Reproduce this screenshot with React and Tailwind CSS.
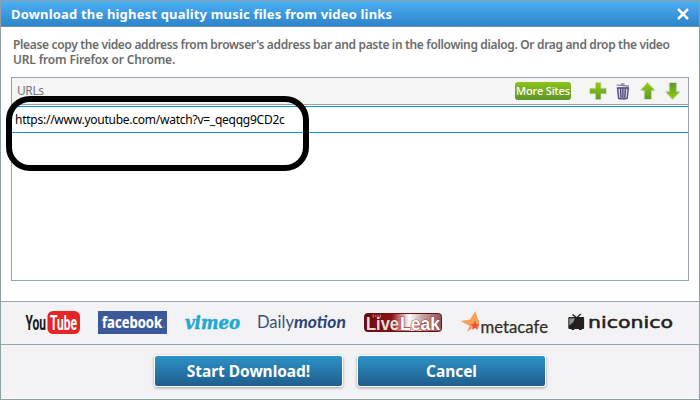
import React from "react";

const green = "url(#green)";

function Defs() {
  return (
    <svg className="absolute h-0 w-0">
      <defs>
        <linearGradient id="green" x1="0" y1="0" x2="0" y2="1">
          <stop offset="0" stopColor="#93cc12" />
          <stop offset="1" stopColor="#5c9c22" />
        </linearGradient>
        <linearGradient id="leak" x1="0" y1="0" x2="1" y2="0">
          <stop offset="0" stopColor="#6d0909" />
          <stop offset="0.36" stopColor="#8c1515" />
          <stop offset="0.47" stopColor="#c98080" />
          <stop offset="0.58" stopColor="#fff" />
          <stop offset="0.75" stopColor="#c9a4a4" />
          <stop offset="1" stopColor="#8a5555" />
        </linearGradient>
      </defs>
    </svg>
  );
}

function ToolIcon({ children }) {
  return (
    <svg width="21" height="20" viewBox="0 0 21 20" className="shrink-0">
      {children}
    </svg>
  );
}

function ArrowUp() {
  const d = "M10.5 1.8 L17.5 9.2 H14.2 V18 H7.6 V9.2 H4 Z";
  return (
    <g>
      <path d={d} fill="#dededf" stroke="#dededf" strokeWidth="2" strokeLinejoin="round" />
      <path d={d} fill={green} />
    </g>
  );
}

function Toolbar() {
  return (
    <div className="flex items-center">
      <button className="mr-[16px] h-[18px] w-[56px] rounded-[3px] bg-linear-to-b from-[#8cc41b] to-[#5d9424] text-center text-[11px] leading-[18px] font-medium tracking-[-0.15px] whitespace-nowrap text-white">
        More Sites
      </button>
      <div className="flex gap-[4px]">
        <ToolIcon>
          <path d="M8.7 1.8h5v5.8h5.4v5h-5.4v5.7h-5v-5.7H2.9v-5h5.8z" fill={green} stroke="#dfe2dc" strokeWidth="1.6" paintOrder="stroke" />
        </ToolIcon>
        <ToolIcon>
          <path d="M5 6.5 L16.5 5.5 L15.3 17.5 Q10.5 19.3 6.3 17.5 Z" fill="#d3d1df" />
          <path d="M4.5 4l12.5 1.2M9 2.8l3.5 .4" stroke="#77738f" strokeWidth="1.2" fill="none" />
          <path d="M5.5 7h10.8l-1.1 10.3q-4.3 1.2-8.6 0z" fill="none" stroke="#4c437e" strokeWidth="1.3" />
          <path d="M8.5 7.4l.6 9.5M10.9 7.4v9.8M13.3 7.4l-.5 9.5" stroke="#4c437e" strokeWidth="1.3" />
        </ToolIcon>
        <ToolIcon>
          <ArrowUp />
        </ToolIcon>
        <ToolIcon>
          <g transform="translate(0 20) scale(1 -1)">
            <ArrowUp />
          </g>
        </ToolIcon>
      </div>
    </div>
  );
}

function LogoStrip() {
  return (
    <svg width="698" height="42" viewBox="1 302 698 42" className="block">
      {/* YouTube */}
      <g fontFamily="Roboto, 'Liberation Sans', sans-serif" fontWeight="700">
        <text x="25.5" y="329.5" fontSize="20" textLength="20.5" lengthAdjust="spacingAndGlyphs" fill="#161616">You</text>
        <rect x="47.5" y="311" width="32.5" height="23" rx="5.5" fill="#e52527" />
        <text x="50" y="329.5" fontSize="19.5" textLength="27" lengthAdjust="spacingAndGlyphs" fill="#fff">Tube</text>
      </g>

      {/* facebook */}
      <rect x="98" y="311" width="69" height="23" fill="#3b5998" />
      <text x="102" y="328" fontFamily="'Open Sans', sans-serif" fontWeight="700" fontSize="15.5" textLength="60" lengthAdjust="spacingAndGlyphs" fill="#fff" stroke="#fff" strokeWidth=".2">facebook</text>
      <circle cx="164" cy="327" r=".6" fill="#b9c5df" />

      {/* vimeo */}
      <text x="185" y="329" stroke="#21a8d0" strokeWidth=".5" fill="#21a8d0" fontFamily="'DejaVu Serif', serif" fontWeight="700" fontStyle="italic" fontSize="18" textLength="55" lengthAdjust="spacingAndGlyphs">vimeo</text>

      {/* Dailymotion */}
      <text x="257" y="328" fontFamily="Lato, sans-serif" fontSize="17" textLength="37" lengthAdjust="spacingAndGlyphs" fill="#3c4e79">Daily</text>
      <text x="294" y="328" fontFamily="Lato, sans-serif" fontWeight="700" fontStyle="italic" fontSize="17" textLength="52" lengthAdjust="spacingAndGlyphs" fill="#2c4377">motion</text>

      {/* LiveLeak */}
      <rect x="364.5" y="313.5" width="77" height="18" rx="3" fill="url(#leak)" stroke="#6d1212" />
      <g fontFamily="'Liberation Sans', sans-serif" fontWeight="700" fontSize="17.5">
        <text x="366" y="329.5" textLength="33" lengthAdjust="spacingAndGlyphs" fill="#e4dcdc">Live</text>
        <text x="400" y="329.5" textLength="40" lengthAdjust="spacingAndGlyphs" fill="#fff" stroke="#9c4040" strokeWidth="1.2" paintOrder="stroke">Leak</text>
      </g>
      <path d="M373.5 314.5q-1.2 1.6 0 3.2M380 314.5q1.2 1.6 0 3.2M375.8 315v2M378 315v2" stroke="#e0b2b2" strokeWidth=".8" fill="none" />

      {/* metacafe */}
      <path d="M475.3 311 L477.6 318.2 L479.2 321 L478.6 328.5 L473.5 327 L467 332 L469.3 325.8 L460.5 321 L470 319.6 Z" fill="#f6a253" />
      <path d="M475 320.8l1.4 3.1 3.3.3-2.5 2.2.8 3.4-3-1.8-3 1.8.8-3.4-2.5-2.2 3.3-.3z" fill="#ed4f4c" />
      <text x="480.5" y="333" fontFamily="Lato, sans-serif" fontSize="17" textLength="67.5" lengthAdjust="spacingAndGlyphs" fill="#302e28" stroke="#302e28" strokeWidth=".25">metacafe</text>

      {/* niconico television */}
      <path d="M572.5 314.5l4.2 3.4 4-4" stroke="#242222" strokeWidth="1.4" fill="none" />
      <rect x="568.3" y="317" width="15.8" height="12" rx="1" fill="#242020" />
      <path d="M569.3 318.3h5.5q-1.2 5-5.5 7z" fill="#929292" />
      <path d="M571.5 328.5h2.7v1.6h-2.7zM579 328.5h2.7v1.6h-2.7z" fill="#242020" />
      {/* niconico wordmark */}
      <text x="588" y="328" fontFamily="'DejaVu Sans', sans-serif" fontSize="15.5" textLength="85" lengthAdjust="spacingAndGlyphs" fill="#242020" stroke="#242020" strokeWidth=".5">niconico</text>
    </svg>
  );
}

function ActionButton({ children }) {
  return (
    <button className="h-[32px] w-[189px] rounded-[3px] border border-white bg-linear-to-b from-[#2f94ca] to-[#1e5c8b] bg-origin-border text-center text-[15.5px] leading-[30px] font-bold tracking-[-0.05px] text-white shadow-[0_1px_3px_#9a9da5]">
      {children}
    </button>
  );
}

export default function App() {
  return (
    <div className="relative flex h-[400px] w-[700px] flex-col bg-white font-['Noto_Sans','Open_Sans',sans-serif]">
      <Defs />
      <div className="flex h-[400px] flex-col border border-[#909ea6]">
        <header className="flex h-[26px] shrink-0 items-center justify-between border-b border-[#6b8fa8] bg-linear-to-b from-[#4cb0f3] to-[#2d84cb] pr-[9px] pl-[10px] text-white">
          <h1 className="text-[13px] leading-[26px] font-bold tracking-[0.18px] whitespace-nowrap">
            Download the highest quality music files from video links
          </h1>
          <svg width="14" height="14" viewBox="0 0 14 14">
            <path d="M2 2l10 10M12 2L2 12" stroke="#2d6ea6" strokeWidth="4.4" opacity=".5" />
            <path d="M2 2l10 10M12 2L2 12" stroke="#fff" strokeWidth="2.7" />
          </svg>
        </header>

        <p className="mt-[10px] ml-[12px] shrink-0 text-[12px] leading-[15px] font-semibold whitespace-nowrap text-[#6b6b6b]">
          <span className="block tracking-[-0.344px]">
            Please copy the video address from browser's address bar and paste in the following dialog. Or drag and drop the video
          </span>
          <span className="block tracking-[-0.16px]">URL from Firefox or Chrome.</span>
        </p>

        <section className="mt-[10px] ml-[10px] flex h-[204px] w-[678px] shrink-0 flex-col border border-[#98a4ab]">
          <div className="flex h-[27px] shrink-0 items-center justify-between border-b border-[#98a4ab] bg-[#f5f5f5] pr-[5px] pl-[5px]">
            <span className="text-[12px] tracking-[-0.4px] text-[#777]">URLs</span>
            <Toolbar />
          </div>
          <div className="mt-px h-[27px] shrink-0 border-y border-[#0a97d2] pl-[3px] text-[12px] leading-[25px] tracking-[-0.25px] text-black">
            https://www.youtube.com/watch?v=_qeqqg9CD2c
          </div>
        </section>

        <div className="mt-[20px] h-[44px] shrink-0 border-y border-[#98a4ab] bg-[#f3f3f5]">
          <LogoStrip />
        </div>
        <footer className="flex flex-1 justify-center gap-[14px] border-b border-white bg-[#f3f3f5] pt-[10px]">
          <ActionButton>Start Download!</ActionButton>
          <ActionButton>Cancel</ActionButton>
        </footer>
      </div>
      {/* Callout ring around the pasted address */}
      <div className="absolute top-[96px] left-[6px] h-[75px] w-[303px] rounded-[24px] border-[6px] border-black" />
    </div>
  );
}
